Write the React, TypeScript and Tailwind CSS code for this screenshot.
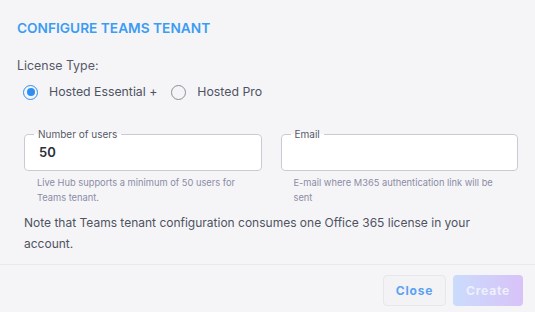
const Radio = ({ checked, label }: { checked?: boolean; label: string }) => (
  <label className="flex items-center gap-[11px]">
    <span
      className={`flex h-[15px] w-[15px] items-center justify-center rounded-full border-[1.5px] ${
        checked ? "border-[#2e8ff0]" : "border-[#8b8d98]"
      }`}
    >
      {checked && <span className="h-[8px] w-[8px] rounded-full bg-[#2e8ff0]" />}
    </span>
    <span className="text-[12.3px] text-[#4f5360]">{label}</span>
  </label>
);

const Field = ({ label, value, help }: { label: string; value?: string; help: string }) => (
  <div className="w-[239px]">
    <fieldset className="h-[43px] rounded-[4px] border border-[#c9cbd3] bg-white px-[9px]">
      <legend className="px-[4px] text-[10px] leading-[12px] text-[#555966]">{label}</legend>
      <div className="pl-[5px] pt-[3px] text-[13px] font-semibold text-[#2b2f38]">{value}</div>
    </fieldset>
    <p className="mt-[4px] px-[13px] text-[9.3px] leading-[15px] text-[#8b8ca3]">{help}</p>
  </div>
);

export default function App() {
  return (
    <div className="flex h-[312px] w-[535px] flex-col bg-[#f5f5f8] font-['Inter',sans-serif]">
      <div className="px-[17px] pt-[19px]">
        <h2 className="text-[13.7px] font-semibold leading-[18px] text-[#3c9cf2]">CONFIGURE TEAMS TENANT</h2>
        <p className="mt-[20px] text-[12.4px] leading-[18px] text-[#555966]">License Type:</p>
        <div className="mt-[8px] flex items-center gap-[14px] pl-[6px]">
          <Radio checked label="Hosted Essential +" />
          <Radio label="Hosted Pro" />
        </div>
        <div className="mt-[27px] flex gap-[19px] pl-[7px]">
          <Field
            label="Number of users"
            value="50"
            help="Live Hub supports a minimum of 50 users for Teams tenant."
          />
          <Field label="Email" help="E-mail where M365 authentication link will be sent" />
        </div>
        <p className="mt-[7px] pl-[7px] text-[12px] leading-[21px] text-[#4f5360]">
          Note that Teams tenant configuration consumes one Office 365 license in your account.
        </p>
      </div>
      <div className="mt-auto border-t border-[#e8e9ee] px-[12px] pb-[6px] pt-[10px]">
        <div className="flex justify-end gap-[7px]">
          <button className="h-[31px] w-[63px] rounded-[4px] border border-[#e6e7eb] bg-[#f3f3f6] text-[12px] font-bold tracking-[0.8px] text-[#5aa2f2]">
            Close
          </button>
          <button className="h-[31px] w-[70px] rounded-[4px] bg-gradient-to-r from-[#cadcfc] to-[#d8c2f8] text-[12px] font-bold tracking-[0.8px] text-[#eef0fc]">
            Create
          </button>
        </div>
      </div>
    </div>
  );
}
